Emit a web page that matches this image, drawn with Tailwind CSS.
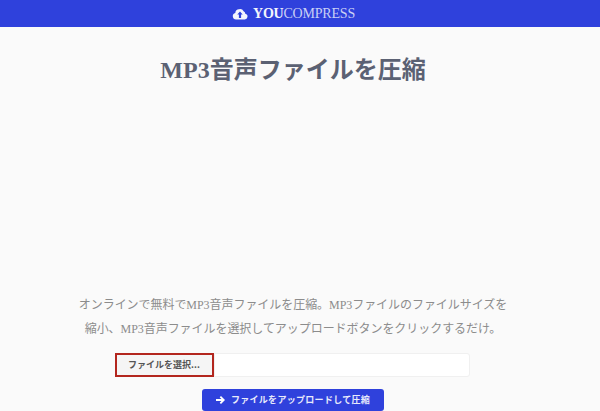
<!DOCTYPE html>
<html lang="ja">
<head>
<meta charset="utf-8">
<script src="https://cdn.jsdelivr.net/npm/@tailwindcss/browser@4"></script>
</head>
<body class="m-0 h-[411px] w-[600px] overflow-hidden bg-[#fafafa] font-['Liberation_Serif','Noto_Sans_CJK_JP',serif]">
<header class="flex h-[27px] items-center justify-center gap-[5px] bg-[#2f41dc] pr-[13px]">
<svg class="h-[14px] w-[16px]" viewBox="0 0 16 14"><path fill="#f4f5fd" d="M4 12.500a3.300 3.300 0 0 1-.7-6.500A3.600 3.600 0 0 1 7 2.300a4 4 0 0 1 4.600 1.900 3 3 0 0 1 1.700 2.600 2.900 2.900 0 0 1-1 5.700z"/><path fill="#2f41dc" d="M8 4.500 10.700 7.600H9.100V11H6.900V7.600H5.300z"/></svg>
<div class="text-[14px] leading-none tracking-[-0.2px] text-[#c9cff5]"><span class="font-bold text-[#f4f5fd]">YOU</span>COMPRESS</div>
</header>
<main class="flex w-[586px] flex-col items-center">
<h1 class="mt-[25px] text-center text-[24px] leading-[36px] font-bold text-[#5b6173]">MP3音声ファイルを圧縮</h1>
<p class="mt-[205px] w-[440px] text-center text-[12px] leading-[24px] tracking-[-0.05px] text-[#8c8c8c]">オンラインで無料でMP3音声ファイルを圧縮。MP3ファイルのファイルサイズを<br>縮小、MP3音声ファイルを選択してアップロードボタンをクリックするだけ。</p>
<div class="mt-[12px] mr-[2px] flex h-[24px] w-[355px] items-stretch">
<div class="flex w-[99px] items-center justify-center border-2 border-[#b3261e] bg-[#f5f5f5] font-['Noto_Sans_CJK_JP',sans-serif] text-[9px] font-bold text-[#555]">ファイルを選択...</div>
<div class="flex-1 rounded-r-[3px] border border-[#f0f0f0] bg-white"></div>
</div>
<button class="mt-[12px] flex h-[22px] w-[182px] items-center justify-center gap-[6px] rounded-[3px] bg-[#2f41dc] font-['Noto_Sans_CJK_JP',sans-serif] text-[9px] font-bold tracking-[0.3px] text-[#e8eafb]">
<svg class="h-[8px] w-[9px]" viewBox="0 0 9 8"><path fill="#fff" d="M5 0 9 4 5 8 3.700 6.700 5.400 5H0V3H5.400L3.700 1.300z"/></svg>
ファイルをアップロードして圧縮
</button>
</main>
</body>
</html>
